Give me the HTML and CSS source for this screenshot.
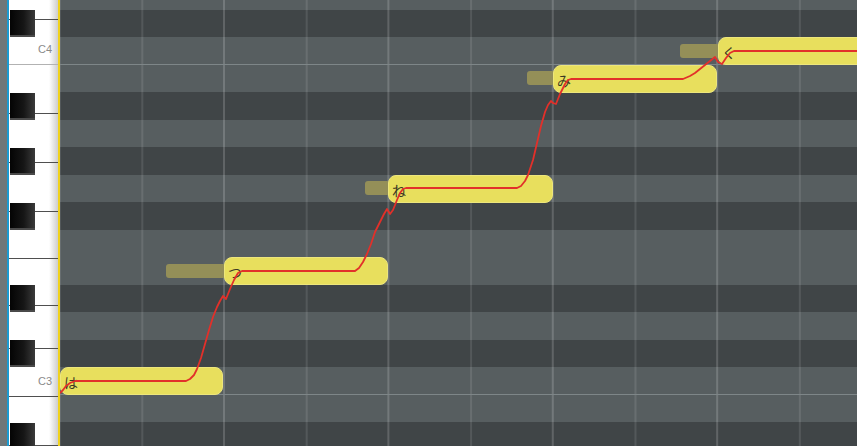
FILE: index.html
```html
<!DOCTYPE html>
<html lang="ja">
<head>
    <meta charset="UTF-8">
    <title>Piano Roll</title>
    <link rel="stylesheet" href="styles.css">
</head>
<body>

    <!-- keyboard on the left -->
    <div class="keys">
        <div class="white-keys">
            <div class="wk"></div>
            <div class="wk oct-line">C4</div>
            <div class="wk"></div>
            <div class="wk"></div>
            <div class="wk"></div>
            <div class="wk"></div>
            <div class="wk"></div>
            <div class="wk"></div>
            <div class="wk">C3</div>
            <div class="wk"></div>
        </div>
        <div class="black-keys">
            <div class="key-row"></div>
            <div class="key-row"><div class="bk"></div></div>
            <div class="key-row"></div>
            <div class="key-row"></div>
            <div class="key-row"><div class="bk"></div></div>
            <div class="key-row"></div>
            <div class="key-row"><div class="bk"></div></div>
            <div class="key-row"></div>
            <div class="key-row"><div class="bk"></div></div>
            <div class="key-row"></div>
            <div class="key-row"></div>
            <div class="key-row"><div class="bk"></div></div>
            <div class="key-row"></div>
            <div class="key-row"><div class="bk"></div></div>
            <div class="key-row"></div>
            <div class="key-row"></div>
            <div class="key-row"><div class="bk"></div></div>
        </div>
    </div>

    <!-- note grid -->
    <div class="roll">
        <div class="rows">
            <div class="row"></div>          <!-- D4 -->
            <div class="row dark"></div>     <!-- C#4 -->
            <div class="row oct"></div>      <!-- C4 -->
            <div class="row"></div>          <!-- B3 -->
            <div class="row dark"></div>     <!-- A#3 -->
            <div class="row"></div>          <!-- A3 -->
            <div class="row dark"></div>     <!-- G#3 -->
            <div class="row"></div>          <!-- G3 -->
            <div class="row dark"></div>     <!-- F#3 -->
            <div class="row"></div>          <!-- F3 -->
            <div class="row"></div>          <!-- E3 -->
            <div class="row dark"></div>     <!-- D#3 -->
            <div class="row"></div>          <!-- D3 -->
            <div class="row dark"></div>     <!-- C#3 -->
            <div class="row oct"></div>      <!-- C3 -->
            <div class="row"></div>          <!-- B2 -->
            <div class="row dark"></div>     <!-- A#2 -->
        </div>

        <div class="layer">
            <div class="pre pre-tsu"></div>
            <div class="pre pre-ne"></div>
            <div class="pre pre-mi"></div>
            <div class="pre pre-ku"></div>

            <div class="note note-ha">は</div>
            <div class="note note-tsu">つ</div>
            <div class="note note-ne">ね</div>
            <div class="note note-mi">み</div>
            <div class="note note-ku">く</div>

            <svg class="pitch" width="797" height="446" viewBox="0 0 797 446">
                <g transform="translate(-60 0)">
                    <polyline fill="none" stroke="#e2302a" stroke-width="1.8" stroke-linejoin="round"
                        points="60,393 63,390 66,386 70,383 75,381 186,381 190,379 194,375 197,369 201,358 205,344 209,330 213,317 217,307 220,301 223,296 226,299 230,289 234,280 238,273 242,271 355,271 359,268 363,262 367,254 371,244 375,232 380,222 384,214 387,209 390,214 393,210 397,200 400,193 403,189 406,188 517,188 521,186 525,181 528,175 533,160 537,143 541,126 545,112 548,105 551,101 553,103 556,104 560,94 565,84 568,80 571,79 683,79 690,76 695,73 700,69 705,65 710,61 715,57 718,62 722,64 726,58 730,53 734,51 857,51"/>
                </g>
            </svg>
        </div>
    </div>

</body>
</html>
```

FILE: styles.css
```css
* {
    box-sizing: border-box;
}

body {
    margin: 0;
    width: 857px;
    height: 446px;
    overflow: hidden;
    display: flex;
    font-family: "Liberation Sans", Arial, sans-serif;
    background-color: #404547;
}

/* keyboard */
.keys {
    width: 60px;
    flex: none;
    position: relative;
    display: flex;
    border-left: 7px solid #6f7779;
    border-right: 2px solid #f0d21c;
    overflow: hidden;
}

.white-keys {
    flex: 1;
    display: grid;
    grid-template-rows: 20px 45px 49px 49px 49px 47px 47px 43px 48px 1fr;
    border-left: 2px solid #1b9bd1;
}

.wk {
    background: linear-gradient(to right, #fff 0, #fff 40px, #cdcdcd 49px);
    border-bottom: 1px solid #4f4f4f;
    display: flex;
    align-items: flex-end;
    justify-content: flex-end;
    padding: 0 6px 9px 0;
    font-size: 11px;
    line-height: 12px;
    color: #8a8a8a;
}

.wk.oct-line {
    border-bottom: 1px solid #b2b2b2;
}

.black-keys {
    position: absolute;
    top: -18px;
    left: 3px;
    display: flex;
    flex-direction: column;
}

.key-row {
    height: 27.5px;
    flex: none;
    padding-top: 0.5px;
}

.bk {
    width: 25px;
    height: 27px;
    background: linear-gradient(to right, #040404 0%, #161616 55%, #3a3a3a 100%);
    border-bottom: 2px solid #4a4a4a;
}

/* grid */
.roll {
    flex: 1;
    position: relative;
    overflow: hidden;
}

.rows {
    display: flex;
    flex-direction: column;
    margin-top: -18px;
}

.row {
    height: 27.5px;
    flex: none;
    background-color: #575e60;
    background-image: linear-gradient(to right,
        rgba(255, 255, 255, 0.17) 0, rgba(255, 255, 255, 0.17) 2px,
        transparent 2px, transparent 82.2px,
        rgba(255, 255, 255, 0.1) 82.2px, rgba(255, 255, 255, 0.1) 84.2px,
        transparent 84.2px);
    background-size: 164.4px 100%;
    background-position: 163px 0;
}

.row.dark {
    background-color: #404547;
}

.row.oct {
    border-bottom: 1.5px solid #7e8688;
}

.layer {
    position: absolute;
    top: 0;
    left: 0;
    right: 0;
    bottom: 0;
}

.pre {
    position: absolute;
    height: 14px;
    background-color: #948f58;
    border-radius: 3px;
}

.pre-tsu { left: 106px; top: 264px; width: 60px; }
.pre-ne  { left: 305px; top: 181px; width: 25px; }
.pre-mi  { left: 467px; top: 71px;  width: 28px; }
.pre-ku  { left: 620px; top: 44px;  width: 40px; }

.note {
    position: absolute;
    height: 28px;
    background-color: #e8df5d;
    border: 1px solid #ede67c;
    border-radius: 8px;
    padding-left: 3px;
    font-family: "Noto Sans CJK JP", sans-serif;
    font-size: 14px;
    line-height: 28px;
    color: #3c3a24;
}

.note-ha  { left: 0;     top: 367px;   width: 163px; }
.note-tsu { left: 164px; top: 257px;   width: 164px; }
.note-ne  { left: 328px; top: 175px;   width: 165px; }
.note-mi  { left: 493px; top: 64.5px;  width: 164px; }
.note-ku  { left: 658px; top: 37px;    width: 200px; }

.pitch {
    position: absolute;
    top: 0;
    left: 0;
}
```
